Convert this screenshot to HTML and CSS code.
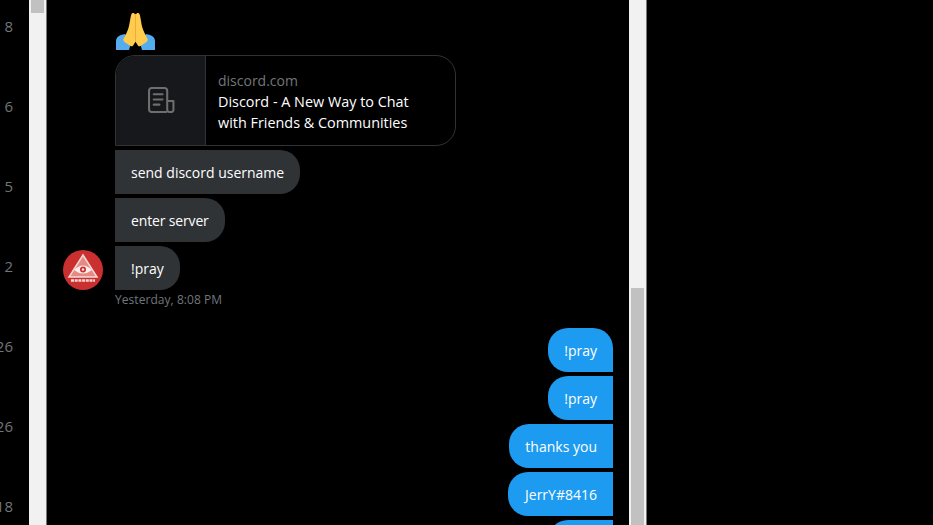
FILE: index.html
```html
<!DOCTYPE html>
<html lang="en">
<head>
<meta charset="utf-8">
<title>Messages</title>
<link rel="stylesheet" href="styles.css">
</head>
<body>
<div class="page">
  <div class="rail">
    <div class="count">8</div>
    <div class="count">6</div>
    <div class="count">5</div>
    <div class="count">2</div>
    <div class="count">26</div>
    <div class="count">26</div>
    <div class="count">18</div>
  </div>
  <div class="scrollbar"><div class="thumb thumb-top"></div></div>
  <main class="chat">
    <div class="incoming">
      <svg class="emoji" viewBox="0 0 39 37" aria-label="folded hands">
        <path fill="#55ACEE" d="M0 37V28c0-3 2-5 5-6l4-1 6 9-2 7zM39 37V28c0-3-2-5-5-6l-4-1-6 9 2 7z"/>
        <path fill="#FFCC4D" d="M19.300 2c-1-2.500-3-2.500-4-.5-1 3-1.500 9-2.800 13.500-1 3-3 7-5 11-.6 1 0 2 1 3l6 4c1 .6 2 .2 2.600-.6l2.200-3.400z"/>
        <path fill="#FFCC4D" d="M19.700 2c1-2.500 3-2.500 4-.5 1 3 1.500 9 2.800 13.500 1 3 3 7 5 11 .6 1 0 2-1 3l-6 4c-1 .6-2 .2-2.600-.6l-2.200-3.400z"/>
        <path fill="#F4A93C" d="M19 1h1v28h-1z"/>
      </svg>
      <a class="card">
        <div class="card-media">
          <svg class="card-icon" viewBox="0 0 26 26" fill="none" stroke="#6e6e6e" stroke-width="2" stroke-linecap="round" stroke-linejoin="round">
            <path d="M17.500 24H3.500A2.500 2.500 0 0 1 1 21.500V3.500A2.500 2.500 0 0 1 3.500 1H16a2.500 2.500 0 0 1 2.500 2.500V22a2 2 0 0 0 2 2h2a2 2 0 0 0 2-2V13.500h-6"/>
            <path d="M5.500 7H14M5.500 12H14M5.500 17H11"/>
          </svg>
        </div>
        <div class="card-body">
          <div class="card-domain">discord.com</div>
          <div class="card-title">Discord - A New Way to Chat with Friends &amp; Communities</div>
        </div>
      </a>
      <div class="bubble in">send discord username</div>
      <div class="bubble in tight">enter server</div>
      <div class="last-row">
        <svg class="avatar" viewBox="0 0 40 40" aria-label="avatar">
          <circle cx="20" cy="20" r="20" fill="#c9302f"/>
          <path d="M20 5 34 27H6z" fill="#e58a85" stroke="#f6d9d6" stroke-width="1.500"/>
          <path d="M11 20q9-9 18 0q-9 7-18 0z" fill="#fbeeec"/>
          <circle cx="20" cy="19.500" r="3" fill="#c9302f"/>
          <circle cx="20" cy="19.500" r="1.200" fill="#fbeeec"/>
          <path d="M8 30.500h24" stroke="#f6d9d6" stroke-width="2.500" stroke-dasharray="3 .7"/>
        </svg>
        <div class="bubble in">!pray</div>
      </div>
      <div class="stamp">Yesterday, 8:08 PM</div>
    </div>
    <div class="outgoing">
      <div class="bubble out first">!pray</div>
      <div class="bubble out">!pray</div>
      <div class="bubble out">thanks you</div>
      <div class="bubble out wide">JerrY#8416</div>
      <div class="bubble out">!pray</div>
    </div>
  </main>
  <div class="scrollbar"><div class="thumb thumb-bottom"></div></div>
  <div class="rest"></div>
</div>
</body>
</html>
```
FILE: styles.css
```css
* { box-sizing: border-box; }
html, body { margin: 0; height: 100%; background: #000; overflow: hidden; }
body { font-family: "Open Sans", "Noto Sans", sans-serif; color: #fff; }
.page { display: flex; height: 525px; overflow: hidden; }

.rail {
  width: 29px; flex: none; padding: 16px 16px 0 0;
  display: flex; flex-direction: column; align-items: flex-end; gap: 60px;
}
.count { font-size: 15px; line-height: 20px; color: #71767b; white-space: nowrap; }

.scrollbar {
  width: 17px; flex: none; height: 100%; background: #f1f1f1;
  padding-left: 2px;
  display: flex; flex-direction: column;
}
.thumb { background: #c1c1c1; width: 13px; }
.thumb-top { height: 13px; }
.thumb-bottom { margin-top: 288px; flex: 1; }

.chat { width: 583px; flex: none; padding: 13px 16px 0 0; overflow: hidden; border-left: 1px solid #777; }
.rest { flex: 1; border-left: 1px solid #777; }

.incoming { padding-left: 68px; display: flex; flex-direction: column; align-items: flex-start; }
.emoji { width: 39px; height: 37px; margin: 0 0 5px 1px; display: block; }

.card {
  display: flex; width: 341px; height: 91px;
  border: 1px solid #2f3336; border-radius: 20px 20px 20px 0; overflow: hidden;
}
.card-media {
  width: 90px; flex: none; background: #16181c; border-right: 1px solid #2f3336;
  display: flex; align-items: center; justify-content: center;
}
.card-icon { width: 27px; height: 27px; margin-left: 2px; }
.card-body { padding: 14px 12px 0; width: 230px; }
.card-domain { font-size: 14px; line-height: 21px; color: #71767b; }
.card-title { font-size: 14.400px; line-height: 21px; color: #fff; }

.bubble {
  font-size: 14px; line-height: 20px; padding: 13px 16px 11px; height: 44px;
  white-space: nowrap; margin-top: 4px;
}
.in { background: #2f3336; border-radius: 0 20px 20px 0; }
.tight { letter-spacing: -.15px; }
.last-row { display: flex; align-items: flex-end; margin-left: -52px; gap: 12px; }
.avatar { width: 40px; height: 40px; flex: none; }
.stamp { font-size: 12px; line-height: 16px; color: #71767b; margin-top: 2px; letter-spacing: .05px; }

.outgoing { display: flex; flex-direction: column; align-items: flex-end; margin-top: 16px; }
.out { background: #1d9bf0; border-radius: 20px 0 0 20px; }
.out.first { border-top-right-radius: 20px; }
.out.wide { padding-left: 17px; }
```
